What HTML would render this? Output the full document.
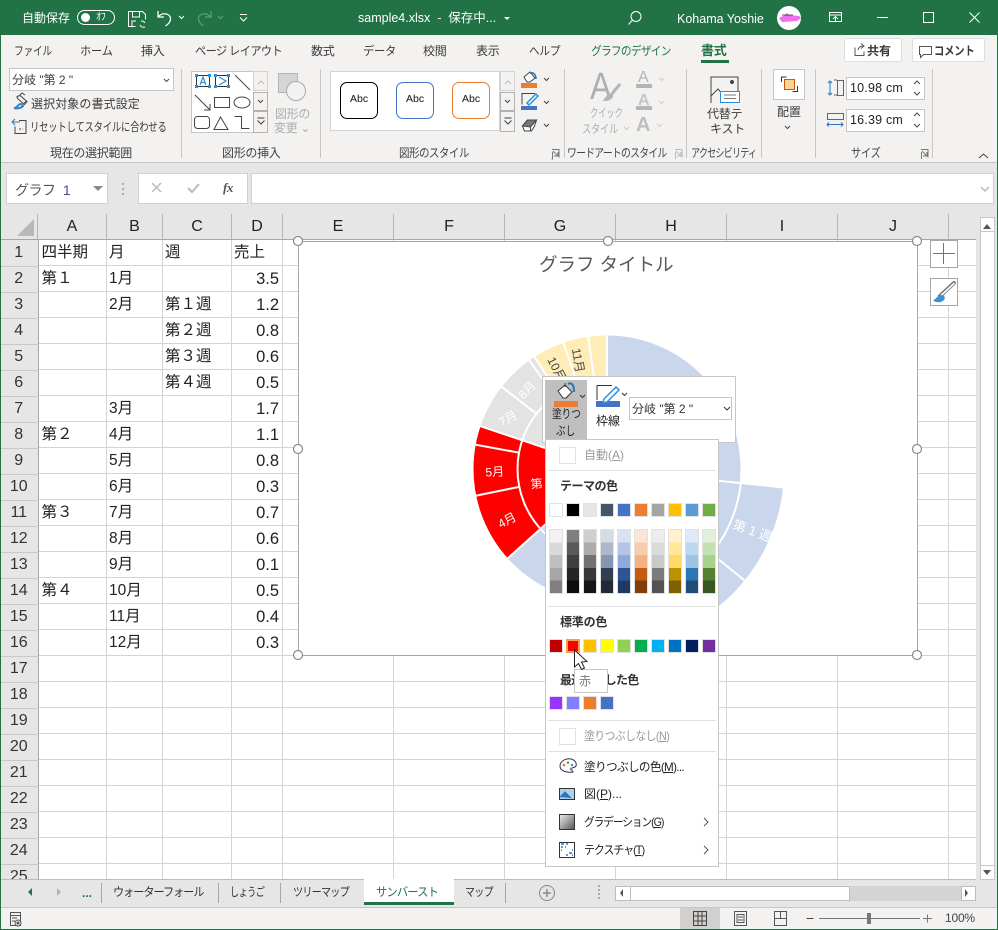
<!DOCTYPE html>
<html lang="ja"><head><meta charset="utf-8"><title>sample4.xlsx</title>
<style>
*{box-sizing:border-box}
html,body{margin:0;padding:0;width:998px;height:930px;overflow:hidden;background:#fff}
body{position:relative;font-family:"Liberation Sans","Noto Sans CJK JP",sans-serif;font-size:12px;color:#3b3a39}
.a{position:absolute}
.t{position:absolute;white-space:nowrap;line-height:16px;height:16px;letter-spacing:-.3px;transform-origin:0 0}
.sv{position:absolute;left:0;top:0;overflow:visible}
#tb .t{color:#fff}
.g{color:#adadad}
table{border-collapse:collapse;table-layout:fixed;position:absolute;left:0;top:0;width:282px;font-size:15.5px;color:#222}
td{height:26px;padding:0 0 0 3px;white-space:nowrap;overflow:visible;line-height:24px;vertical-align:middle}
td.h{background:#e6e6e6;border-bottom:1px solid #c9c9c9;border-right:1px solid #a6a6a6;text-align:center;padding:0;color:#333;font-size:16px}
td.n{text-align:right;padding:0 3px 0 0;font-size:16.5px}
.sw{position:absolute;width:14px;height:14px;border:1px solid #e1e1e1}
.tc{position:absolute;top:529px;width:14px;height:65px;border:1px solid #e1e1e1}
.sep{position:absolute;left:548px;width:168px;height:1px;background:#e1e1e1}
.col{position:absolute;top:214px;height:25px;line-height:25px;text-align:center;font-size:16px;color:#222;border-right:1px solid #b5b5b5}
.vs{position:absolute;width:1px;background:#c8c6c4;top:69px;height:89px}
.grp{position:absolute;top:145px;line-height:16px;white-space:nowrap;letter-spacing:-.3px;color:#444;transform-origin:0 0}
</style></head><body>

<!-- title bar -->
<div id="tb" class="a" style="left:0;top:0;width:998px;height:35px;background:#217346">
<div class="t" style="left:22px;top:10px;letter-spacing:0">自動保存</div>
<div class="a" style="left:77px;top:10px;width:38px;height:15px;border:1px solid #fff;border-radius:8px"></div>
<div class="a" style="left:81px;top:13px;width:9px;height:9px;background:#fff;border-radius:50%"></div>
<div class="t" style="left:96px;top:10px;font-size:10px">ｵﾌ</div>
<div class="t" style="left:358px;top:10px;letter-spacing:0;font-size:12.5px">sample4.xlsx&nbsp; -&nbsp; 保存中...</div>
<div class="t" style="left:677px;top:11px;letter-spacing:0;font-size:12.5px">Kohama Yoshie</div>
<svg class="sv" width="998" height="35" fill="none" stroke="#fff">
<path d="M128.500 11.500h14l3 3v5M128.500 11.500v15h7M132.500 12v5h7v-5M132 26v-5h4"/>
<path d="M141 21a4 4 0 0 1 4 2M145 27a4 4 0 0 1-5-2" />
<path stroke-width="1.300" d="M158 11v6h6M158.500 17c3-5 12-4 12 2 0 3-2 5-5 7"/>
<path d="M179 16l2.500 2.500L184 16"/>
<path stroke="#5a9a78" stroke-width="1.300" d="M211 11v6h-6M210.500 17c-3-5-12-4-12 2 0 3 2 5 5 7M218 16l2.500 2.500L223 16"/>
<path d="M240 14.500h7M240 17.500l3.500 3.500 3.500-3.500"/>
<path fill="#fff" stroke="none" d="M504 17h6l-3 3z"/>
<circle cx="636" cy="16.500" r="5"/><path d="M632.500 20l-4 4.500"/>
<path d="M829.500 12.500h12v9h-12zM829.500 15h12M835.500 21v-4M833 19l2.500-2.500L838 19"/>
<path d="M877 17.500h11M923.500 12.500h10v10h-10zM969.500 12.500l10 10M979.500 12.500l-10 10"/>
<circle cx="789" cy="18" r="12" fill="#fff" stroke="none"/>
<path d="M779 18l6-3 2-2 2 2 10 1 2 2-4 3-15 1z" fill="#f06ef0" stroke="none"/>
<path d="M782 15h11" stroke="#222" stroke-width=".7"/>
</svg>
</div>

<!-- ribbon -->
<div class="a" style="left:0;top:35px;width:998px;height:128px;background:#f3f2f1;border-bottom:1px solid #c8c6c4"></div>
<div class="t" style="left:14px;top:43px;transform:scaleX(.81)">ファイル</div>
<div class="t" style="left:80px;top:43px;transform:scaleX(.94)">ホーム</div>
<div class="t" style="left:141px;top:43px">挿入</div>
<div class="t" style="left:195px;top:43px;letter-spacing:-.6px;transform:scaleX(.93)">ページ レイアウト</div>
<div class="t" style="left:311px;top:43px">数式</div>
<div class="t" style="left:363px;top:43px;transform:scaleX(.94)">データ</div>
<div class="t" style="left:423px;top:43px">校閲</div>
<div class="t" style="left:476px;top:43px">表示</div>
<div class="t" style="left:529px;top:43px;transform:scaleX(.89)">ヘルプ</div>
<div class="t" style="left:591px;top:43px;color:#217346;letter-spacing:-.8px;transform:scaleX(.89)">グラフのデザイン</div>
<div class="t" style="left:701px;top:43px;color:#217346;font-weight:bold;font-size:13px">書式</div>
<div class="a" style="left:701px;top:60px;width:28px;height:3px;background:#217346"></div>
<div class="a" style="left:844px;top:38px;width:58px;height:24px;background:#fff;border:1px solid #e1dfdd;border-radius:2px"></div>
<div class="t" style="left:867px;top:43px;font-weight:bold;letter-spacing:0">共有</div>
<div class="a" style="left:912px;top:38px;width:73px;height:24px;background:#fff;border:1px solid #e1dfdd;border-radius:2px"></div>
<div class="t" style="left:934px;top:43px;font-weight:bold;letter-spacing:-.2px;transform:scaleX(.86)">コメント</div>

<div class="a" style="left:9px;top:68px;width:165px;height:23px;background:#fff;border:1px solid #c8c6c4"></div>
<div class="t" style="left:12px;top:72px;letter-spacing:0">分岐 "第 2 "</div>
<div class="t" style="left:31px;top:96px;letter-spacing:.1px">選択対象の書式設定</div>
<div class="t" style="left:30px;top:119px;transform:scaleX(.78)">リセットしてスタイルに合わせる</div>
<div class="grp" style="left:50px">現在の選択範囲</div>
<div class="vs" style="left:181px"></div>
<div class="a" style="left:191px;top:71px;width:77px;height:62px;background:#fff;border:1px solid #c8c6c4"></div>
<div class="a" style="left:253px;top:71px;width:15px;height:20px;background:#f3f2f1;border:1px solid #d5d3d1"></div>
<div class="a" style="left:253px;top:92px;width:15px;height:19px;background:#f3f2f1;border:1px solid #b5b3b1"></div>
<div class="a" style="left:253px;top:111px;width:15px;height:22px;background:#f3f2f1;border:1px solid #b5b3b1"></div>
<div class="a g" style="left:278px;top:73px;width:20px;height:20px;background:#d5d5d5;border:1px solid #b5b5b5"></div>
<div class="a" style="left:286px;top:81px;width:20px;height:20px;background:#f3f2f1;border:1px solid #a8a8a8;border-radius:50%"></div>
<div class="t g" style="left:275px;top:106px">図形の</div>
<div class="t g" style="left:274px;top:120px">変更 ⌄</div>
<div class="grp" style="left:222px">図形の挿入</div>
<div class="vs" style="left:320px"></div>
<div class="a" style="left:330px;top:71px;width:170px;height:60px;background:#fff;border:1px solid #d5d3d1"></div>
<div class="a" style="left:340px;top:82px;width:38px;height:37px;background:#fff;border:1px solid #000;border-radius:7px"></div>
<div class="a" style="left:396px;top:82px;width:38px;height:37px;background:#fff;border:1px solid #4472c4;border-radius:7px"></div>
<div class="a" style="left:452px;top:82px;width:38px;height:37px;background:#fff;border:1px solid #ed7d31;border-radius:7px"></div>
<div class="t" style="left:350px;top:91px;font-size:10.500px;color:#111;letter-spacing:0">Abc</div>
<div class="t" style="left:406px;top:91px;font-size:10.500px;color:#111;letter-spacing:0">Abc</div>
<div class="t" style="left:462px;top:91px;font-size:10.500px;color:#111;letter-spacing:0">Abc</div>
<div class="a" style="left:500px;top:71px;width:15px;height:20px;background:#f3f2f1;border:1px solid #d5d3d1"></div>
<div class="a" style="left:500px;top:92px;width:15px;height:19px;background:#f3f2f1;border:1px solid #b5b3b1"></div>
<div class="a" style="left:500px;top:111px;width:15px;height:21px;background:#f3f2f1;border:1px solid #b5b3b1"></div>
<div class="a" style="left:521px;top:83px;width:16px;height:5px;background:#ed7d31"></div>
<div class="a" style="left:521px;top:106px;width:16px;height:4px;background:#4472c4"></div>
<div class="grp" style="left:399px;letter-spacing:-.6px;transform:scaleX(.875)">図形のスタイル</div>
<div class="vs" style="left:564px"></div>
<div class="t g" style="left:590px;top:105px;transform:scaleX(.7)">クイック</div>
<div class="t g" style="left:582px;top:121px;transform:scaleX(.77)">スタイル</div>
<div class="t" style="left:590px;top:65px;font-size:38px;line-height:44px;height:44px;color:#b0b0b0;letter-spacing:0;transform:scaleX(.85)">A</div>
<div class="t" style="left:638px;top:69px;font-size:16px;line-height:18px;height:18px;color:#b5b5b5;letter-spacing:0">A</div>
<div class="a" style="left:636px;top:84px;width:16px;height:4px;background:#b5b5b5"></div>
<div class="t" style="left:638px;top:92px;font-size:16px;line-height:18px;height:18px;color:#c5c5c5;letter-spacing:0;font-weight:bold">A</div>
<div class="a" style="left:636px;top:106px;width:16px;height:4px;background:#b5b5b5"></div>
<div class="t" style="left:636px;top:114px;font-size:20px;line-height:22px;height:22px;color:#c0c0c0;letter-spacing:0;font-weight:bold">A</div>
<div class="grp" style="left:567px;letter-spacing:-.9px;transform:scaleX(.82)">ワードアートのスタイル</div>
<div class="vs" style="left:686px"></div>
<div class="t" style="left:707px;top:106px;letter-spacing:-.2px">代替テ</div>
<div class="t" style="left:710px;top:121px;letter-spacing:-.2px">キスト</div>
<div class="grp" style="left:691px;letter-spacing:-1.100px;transform:scaleX(.76)">アクセシビリティ</div>
<div class="vs" style="left:761px"></div>
<div class="a" style="left:773px;top:69px;width:32px;height:31px;background:#fff;border:1px solid #c8c6c4"></div>
<div class="a" style="left:784px;top:79px;width:11px;height:11px;background:#fbd58f;border:1px solid #c55a11"></div>
<div class="t" style="left:777px;top:104px;letter-spacing:0">配置</div>
<div class="vs" style="left:815px"></div>
<div class="a" style="left:846px;top:77px;width:79px;height:23px;background:#fff;border:1px solid #c8c6c4"></div>
<div class="a" style="left:846px;top:109px;width:79px;height:23px;background:#fff;border:1px solid #c8c6c4"></div>
<div class="t" style="left:850px;top:80px;letter-spacing:.2px;font-size:12.500px;color:#222">10.98 cm</div>
<div class="t" style="left:850px;top:112px;letter-spacing:.2px;font-size:12.500px;color:#222">16.39 cm</div>
<div class="grp" style="left:851px;transform:scaleX(.85)">サイズ</div>
<div class="vs" style="left:932px"></div>
<svg class="sv" width="998" height="165" fill="none" stroke="#444">
<!-- group1 icons -->
<path d="M17 96.500l3-1 7 6-2.500 3-7-6zM20 95l2-2 3 2"/><path stroke="#444" d="M24 103l3-2"/>
<path stroke="#3d7fc4" stroke-width="2" d="M14 108c3 0 4-3 6-4 2 0 3 1 3 2-2 2-5 3-9 2z"/>
<path d="M19 120.500h7v13H15v-7"/><path stroke="#2e75b6" d="M13 122h7M15 119l-3 3 3 3"/><path stroke-dasharray="2 1.500" d="M19 129h4"/>
<!-- shape gallery -->
<g stroke="#333"><rect x="196.500" y="75.500" width="13" height="11"/><rect x="215.500" y="75.500" width="13" height="11"/></g>
<g fill="#2e8fd8" stroke="none"><rect x="195" y="74" width="3" height="3"/><rect x="208" y="74" width="3" height="3"/><rect x="195" y="85" width="3" height="3"/><rect x="208" y="85" width="3" height="3"/><rect x="214" y="74" width="3" height="3"/><rect x="227" y="74" width="3" height="3"/><rect x="214" y="85" width="3" height="3"/><rect x="227" y="85" width="3" height="3"/></g>
<path stroke="#2e8fd8" stroke-width="1.200" d="M200 85l3-8 3 8M201 82.500h4M219 77l7 4-7 4"/>
<path d="M235 75l15 15"/>
<path d="M195 95l15 15M210 104v6h-6"/>
<rect x="214.500" y="97.500" width="15" height="10"/><ellipse cx="242" cy="102.500" rx="8" ry="5.500"/>
<rect x="194.500" y="116.500" width="15" height="12" rx="3"/><path d="M220.500 117l-6.500 12.500h14z"/><path d="M234.500 116.500h7v12h8"/>
<path stroke="#bbb" d="M258 84l3-3 3 3"/><path d="M258 100l2.500 2.500 2.500-2.500M257.500 118h7M257.500 120.500l3.500 3.500 3.500-3.500"/>
<path stroke="#bbb" d="M505 84l3-3 3 3"/><path d="M505 100l2.500 2.500 2.500-2.500M504.500 118h7M504.500 120.500l3.500 3.500 3.500-3.500"/>
<!-- fill/line/effect -->
<path d="M524 77l6-5 5 6-5 4h-3z" fill="#fff"/><path stroke="#2e75b6" stroke-width="1.500" d="M530 73c4-1 6 2 6 6"/>
<path d="M544 78l2.500 2.500 2.500-2.500M544 101l2.500 2.500 2.500-2.500M544 124l2.500 2.500 2.500-2.500"/>
<path d="M535 93.500h-13v11"/><path stroke="#2e8fd8" stroke-width="1.500" d="M527 103l9-9 2 2-9 9z" fill="#fff"/>
<path d="M522.500 126l5-6h9l-2 6-3 5h-7z" fill="#fff" stroke="#444"/><path d="M522.500 126l8 1 6-7h-9z" fill="#777" stroke="#444"/><path d="M530.500 127v4" stroke="#444"/>
<!-- launchers -->
<path stroke="#777" d="M552.500 152v7h-1M552 149.500h7v8M553 151l5 5M558 152v4h-4"/>
<path stroke="#bbb" d="M675.500 152v7M675 149.500h7v8M676 151l5 5M681 152v4h-4"/>
<path stroke="#777" d="M921.500 152v7M921 149.500h7v8M922 151l5 5M927 152v4h-4"/>
<path d="M979 158l4.500-4 4.500 4"/>
<!-- wordart -->
<path stroke="#b5b5b5" stroke-width="3" d="M620 84l-9 11"/><path d="M603 101c2-4 5-8 9-7 2 1 1 4-1 5-2 2-5 2-8 2z" fill="#b5b5b5" stroke="none"/>
<path stroke="#ccc" d="M659 78l2.500 2.500 2.500-2.500M659 101l2.500 2.500 2.500-2.500M657 124l2.500 2.500 2.500-2.500M624 127l2.500 2.500 2.500-2.500"/>
<!-- alt text -->
<path d="M711 103V77h27v14M711 96l7-7 7 8 5-3 5 3"/><circle cx="732" cy="82" r="1.500" fill="#444"/>
<rect x="720.500" y="91.500" width="19" height="11" fill="#fff" stroke="#2e8fd8"/><path d="M724 95h12M724 98.500h12" stroke="#777"/>
<path d="M785 126l2.500 2.500 2.500-2.500"/>
<path d="M781.500 82v-5h5M797.500 86v5.500h-5" stroke="#333"/>
<path stroke="#2e75b6" d="M830 81v14M828 83l2-2 2 2M828 93l2 2 2-2"/><rect x="837.500" y="80.500" width="6" height="15" stroke="#666"/><path stroke="#666" d="M834 80h3M834 95h3"/>
<path stroke="#2e75b6" d="M827 124.500h16M829 122.500l-2 2 2 2M841 122.500l2 2-2 2"/><path stroke="#666" d="M827.500 113.500h16v6h-16z"/>
<path d="M914 84l3-3 3 3M914 92l3 3 3-3M914 116l3-3 3 3M914 124l3 3 3-3"/>
<path d="M164 79l2.500 2.500 2.500-2.500"/>
<path d="M855 47.500v8h9v-4M858 50c1-4 4-4 5-4M861 43.500l3 2.500-3 2.500" stroke="#555"/>
<path d="M919.500 46.500h12v8h-8l-3 3v-3h-1z" stroke="#555"/>
</svg>

<!-- formula bar -->
<div class="a" style="left:0;top:163px;width:998px;height:767px;background:#e6e6e6"></div>
<div class="a" style="left:6px;top:173px;width:102px;height:31px;background:#fff;border:1px solid #d0d0d0"></div>
<div class="t" style="left:15px;top:182px;color:#555;font-size:14px;letter-spacing:-.5px">グラフ&nbsp;<span style="color:#4a4a8a;margin-left:4px">1</span></div>
<div class="a" style="left:93px;top:186px;border:5px solid transparent;border-top:5px solid #888"></div>
<div class="a" style="left:138px;top:173px;width:110px;height:31px;background:#fff;border:1px solid #d0d0d0"></div>
<div class="a" style="left:251px;top:173px;width:743px;height:31px;background:#fff;border:1px solid #d0d0d0"></div>
<div class="t" style="left:223px;top:180px;font-family:'Liberation Serif',serif;font-style:italic;font-weight:bold;font-size:13px;color:#555;letter-spacing:-.5px">fx</div>
<svg class="sv" width="998" height="240" fill="none">
<path stroke="#bbb" stroke-width="1.500" d="M152 183l9 9M161 183l-9 9"/><path stroke="#bbb" stroke-width="2" d="M188 188l4 4 7-8"/>
<path stroke="#aaa" stroke-width="2" stroke-dasharray="2 3" d="M123 183v12"/>
<path stroke="#bbb" stroke-width="1.500" d="M981 187l4 4 4-4"/>
<path fill="#b8b8b8" d="M17 236l17-17v17z"/>
</svg>

<!-- column headers -->
<div class="a" style="left:0;top:214px;width:38px;height:25px;border-right:1px solid #b5b5b5"></div>
<div class="col" style="left:38px;width:69px">A</div>
<div class="col" style="left:107px;width:56px">B</div>
<div class="col" style="left:163px;width:69px">C</div>
<div class="col" style="left:232px;width:51px">D</div>
<div class="col" style="left:283px;width:111px">E</div>
<div class="col" style="left:394px;width:111px">F</div>
<div class="col" style="left:505px;width:111px">G</div>
<div class="col" style="left:616px;width:111px">H</div>
<div class="col" style="left:727px;width:111px">I</div>
<div class="col" style="left:838px;width:111px">J</div>
<div class="a" style="left:0;top:239px;width:976px;height:1px;background:#a6a6a6"></div>

<!-- sheet -->
<div class="a" style="left:38px;top:240px;width:938px;height:639px;background:#fff repeating-linear-gradient(to bottom,transparent 0 25px,#d4d4d4 25px 26px)"></div>
<svg class="sv" style="top:240px;left:0" width="976" height="639"><path stroke="#d4d4d4" fill="none" d="M106.500 0v639M162.500 0v639M231.500 0v639M282.500 0v639M393.500 0v639M504.500 0v639M615.500 0v639M726.500 0v639M837.500 0v639M948.500 0v639"/></svg>
<div class="a" style="left:0;top:240px;width:282px;height:639px;overflow:hidden">
<table><colgroup><col style="width:38px"><col style="width:68px"><col style="width:56px"><col style="width:69px"><col style="width:51px"></colgroup>
<tr><td class="h">1</td><td>四半期</td><td>月</td><td>週</td><td>売上</td></tr>
<tr><td class="h">2</td><td>第１</td><td>1月</td><td></td><td class="n">3.5</td></tr>
<tr><td class="h">3</td><td></td><td>2月</td><td>第１週</td><td class="n">1.2</td></tr>
<tr><td class="h">4</td><td></td><td></td><td>第２週</td><td class="n">0.8</td></tr>
<tr><td class="h">5</td><td></td><td></td><td>第３週</td><td class="n">0.6</td></tr>
<tr><td class="h">6</td><td></td><td></td><td>第４週</td><td class="n">0.5</td></tr>
<tr><td class="h">7</td><td></td><td>3月</td><td></td><td class="n">1.7</td></tr>
<tr><td class="h">8</td><td>第２</td><td>4月</td><td></td><td class="n">1.1</td></tr>
<tr><td class="h">9</td><td></td><td>5月</td><td></td><td class="n">0.8</td></tr>
<tr><td class="h">10</td><td></td><td>6月</td><td></td><td class="n">0.3</td></tr>
<tr><td class="h">11</td><td>第３</td><td>7月</td><td></td><td class="n">0.7</td></tr>
<tr><td class="h">12</td><td></td><td>8月</td><td></td><td class="n">0.6</td></tr>
<tr><td class="h">13</td><td></td><td>9月</td><td></td><td class="n">0.1</td></tr>
<tr><td class="h">14</td><td>第４</td><td>10月</td><td></td><td class="n">0.5</td></tr>
<tr><td class="h">15</td><td></td><td>11月</td><td></td><td class="n">0.4</td></tr>
<tr><td class="h">16</td><td></td><td>12月</td><td></td><td class="n">0.3</td></tr>
<tr><td class="h">17</td><td></td><td></td><td></td><td></td></tr>
<tr><td class="h">18</td><td></td><td></td><td></td><td></td></tr>
<tr><td class="h">19</td><td></td><td></td><td></td><td></td></tr>
<tr><td class="h">20</td><td></td><td></td><td></td><td></td></tr>
<tr><td class="h">21</td><td></td><td></td><td></td><td></td></tr>
<tr><td class="h">22</td><td></td><td></td><td></td><td></td></tr>
<tr><td class="h">23</td><td></td><td></td><td></td><td></td></tr>
<tr><td class="h">24</td><td></td><td></td><td></td><td></td></tr>
<tr><td class="h">25</td><td></td><td></td><td></td><td></td></tr>
</table></div>

<!-- chart -->
<div class="a" style="left:298px;top:241px;width:620px;height:415px;background:#fff;border:1px solid #a6a6a6"></div>
<div class="t" style="left:539px;top:253px;height:24px;line-height:24px;font-size:18.500px;color:#595959;letter-spacing:0">グラフ タイトル</div>
<svg class="sv" width="998" height="930" fill="none" font-family="'Liberation Sans','Noto Sans CJK JP',sans-serif">
<g transform="translate(607 469)">
<g stroke-width="44" stroke="#c9d6ec">
<circle r="67" stroke-width="44" pathLength="360" stroke-dasharray="228 132" transform="rotate(-90)"/>
<circle r="112" pathLength="360" stroke-dasharray="228 132" transform="rotate(-90)"/>
<circle r="155.500" stroke-width="43" pathLength="360" stroke-dasharray="85.300 274.700" transform="rotate(6)"/>
<circle r="67" stroke="#f00" pathLength="360" stroke-dasharray="60.500 299.500" transform="rotate(138)"/>
<circle r="112" stroke="#f00" pathLength="360" stroke-dasharray="60.500 299.500" transform="rotate(138)"/>
<circle r="67" stroke="#e3e3e3" pathLength="360" stroke-dasharray="38.500 321.500" transform="rotate(198.700)"/>
<circle r="112" stroke="#e3e3e3" pathLength="360" stroke-dasharray="38.500 321.500" transform="rotate(198.700)"/>
<circle r="67" stroke="#ffedb8" pathLength="360" stroke-dasharray="33 327" transform="rotate(237)"/>
<circle r="112" stroke="#ffedb8" pathLength="360" stroke-dasharray="33 327" transform="rotate(237)"/>
</g>
<g stroke="#fff" stroke-width="2">
<circle r="134.500"/><circle r="89.500"/>
<path id="sp" d="M0-45V-177" transform="rotate(96)"/>
<path d="M0-134V-177" transform="rotate(129)"/><path d="M0-134V-177" transform="rotate(151)"/><path d="M0-134V-177" transform="rotate(167.500)"/>
<path d="M0-45V-134" transform="rotate(181.300)"/><path d="M0-45V-134" transform="rotate(228)"/>
<path d="M0-89V-134" transform="rotate(258.500)"/><path d="M0-89V-134" transform="rotate(280.500)"/>
<path d="M0-45V-134" transform="rotate(288.700)"/><path d="M0-89V-134" transform="rotate(308)"/><path d="M0-89V-134" transform="rotate(324.400)"/>
<path d="M0-45V-134" transform="rotate(327.100)"/><path d="M0-89V-134" transform="rotate(340.900)"/><path d="M0-89V-134" transform="rotate(351.900)"/><path d="M0-45V-134"/>
</g>
</g>
<g font-size="12" text-anchor="middle" fill="#fff" stroke="none">
<text transform="translate(495 476) rotate(-3)">5月</text>
<text transform="translate(509 524) rotate(-28)">4月</text>
<text transform="translate(537 488) rotate(-5)">第</text>
<text transform="translate(510 422) rotate(-30)">7月</text>
<text transform="translate(530 393) rotate(-45)">8月</text>
<text transform="translate(751 535) rotate(20)" font-size="13">第 1 週</text>
<text transform="translate(553 371) rotate(62)" fill="#444">10月</text>
<text transform="translate(574 361) rotate(80)" fill="#444">11月</text>
</g>
<g fill="#fff" stroke="#8a8a8a" stroke-width="1.200">
<circle cx="298" cy="241" r="4.500"/><circle cx="608" cy="241" r="4.500"/><circle cx="917" cy="241" r="4.500"/>
<circle cx="298" cy="449" r="4.500"/><circle cx="917" cy="449" r="4.500"/>
<circle cx="298" cy="655" r="4.500"/><circle cx="608" cy="655" r="4.500"/><circle cx="917" cy="655" r="4.500"/>
</g>
<rect x="930.500" y="240.500" width="27" height="27" fill="#fff" stroke="#a6a6a6"/>
<path d="M943.500 243v21M933 253.500h22" stroke="#22a34a" stroke-width="1"/>
<rect x="930.500" y="278.500" width="27" height="27" fill="#fff" stroke="#a6a6a6"/>
<path d="M940 296l14-13" stroke="#777" stroke-width="4" stroke-linecap="round"/><path d="M940.500 296l13.500-12.500" stroke="#fff" stroke-width="1.600" stroke-linecap="round"/>
<path d="M933 300c3 0 4-5 8-5 3 0 5 2 3 5-3 3-8 3-11 0z" fill="#3d8ede"/>
</svg>

<!-- float toolbar -->
<div class="a" style="left:542px;top:376px;width:194px;height:67px;background:#fff;border:1px solid #c6c6c6"></div>
<div class="a" style="left:545px;top:380px;width:42px;height:60px;background:#bfbfbf"></div>
<div class="a" style="left:554px;top:401px;width:24px;height:6px;background:#ed7d31"></div>
<div class="a" style="left:596px;top:401px;width:24px;height:6px;background:#4472c4"></div>
<div class="t" style="left:552px;top:406px;color:#222;letter-spacing:0;transform:scaleX(.8)">塗りつ</div>
<div class="t" style="left:556px;top:423px;color:#222;letter-spacing:0;transform:scaleX(.8)">ぶし</div>
<div class="t" style="left:596px;top:413px;color:#222;letter-spacing:0">枠線</div>
<div class="a" style="left:629px;top:397px;width:103px;height:23px;background:#fff;border:1px solid #c6c6c6"></div>
<div class="t" style="left:632px;top:401px;color:#333;letter-spacing:0">分岐 "第 2 "</div>

<!-- color menu -->
<div class="a" style="left:545px;top:439px;width:174px;height:428px;background:#fff;border:1px solid #c6c6c6"></div>
<div class="a" style="left:559px;top:447px;width:17px;height:17px;border:1px solid #e1e1e1"></div>
<div class="t g" style="left:584px;top:447px;color:#999;letter-spacing:0">自動(<u>A</u>)</div>
<div class="sep" style="top:470px"></div>
<div class="t" style="left:560px;top:478px;font-weight:bold;color:#333;letter-spacing:-.5px">テーマの色</div>
<div class="sw" style="left:549px;top:503px;background:#fff"></div>
<div class="sw" style="left:566px;top:503px;background:#000"></div>
<div class="sw" style="left:583px;top:503px;background:#e7e6e6"></div>
<div class="sw" style="left:600px;top:503px;background:#44546a"></div>
<div class="sw" style="left:617px;top:503px;background:#4472c4"></div>
<div class="sw" style="left:634px;top:503px;background:#ed7d31"></div>
<div class="sw" style="left:651px;top:503px;background:#a5a5a5"></div>
<div class="sw" style="left:668px;top:503px;background:#ffc000"></div>
<div class="sw" style="left:685px;top:503px;background:#5b9bd5"></div>
<div class="sw" style="left:702px;top:503px;background:#70ad47"></div>
<div class="tc" style="left:549px;background:linear-gradient(#f2f2f2 20%,#d9d9d9 20% 40%,#bfbfbf 40% 60%,#a6a6a6 60% 80%,#808080 80%)"></div>
<div class="tc" style="left:566px;background:linear-gradient(#7f7f7f 20%,#595959 20% 40%,#404040 40% 60%,#262626 60% 80%,#0d0d0d 80%)"></div>
<div class="tc" style="left:583px;background:linear-gradient(#d0cece 20%,#aeabab 20% 40%,#757171 40% 60%,#3a3838 60% 80%,#171616 80%)"></div>
<div class="tc" style="left:600px;background:linear-gradient(#d6dce5 20%,#adb9ca 20% 40%,#8497b0 40% 60%,#333f50 60% 80%,#222a35 80%)"></div>
<div class="tc" style="left:617px;background:linear-gradient(#d9e2f3 20%,#b4c6e7 20% 40%,#8eaadb 40% 60%,#2f5496 60% 80%,#1f3864 80%)"></div>
<div class="tc" style="left:634px;background:linear-gradient(#fbe5d6 20%,#f8cbad 20% 40%,#f4b183 40% 60%,#c55a11 60% 80%,#843c0c 80%)"></div>
<div class="tc" style="left:651px;background:linear-gradient(#ededed 20%,#dbdbdb 20% 40%,#c9c9c9 40% 60%,#7b7b7b 60% 80%,#525252 80%)"></div>
<div class="tc" style="left:668px;background:linear-gradient(#fff2cc 20%,#ffe699 20% 40%,#ffd966 40% 60%,#bf9000 60% 80%,#7f6000 80%)"></div>
<div class="tc" style="left:685px;background:linear-gradient(#deebf7 20%,#bdd7ee 20% 40%,#9dc3e6 40% 60%,#2e75b6 60% 80%,#1f4e79 80%)"></div>
<div class="tc" style="left:702px;background:linear-gradient(#e2f0d9 20%,#c5e0b4 20% 40%,#a9d18e 40% 60%,#548235 60% 80%,#385723 80%)"></div>
<div class="sep" style="top:606px"></div>
<div class="t" style="left:560px;top:614px;font-weight:bold;color:#333;letter-spacing:-.2px">標準の色</div>
<div class="sw" style="left:549px;top:639px;background:#c00000"></div>
<div class="sw" style="left:566px;top:639px;background:#f00;border:2px solid #f4a14f"></div>
<div class="sw" style="left:583px;top:639px;background:#ffc000"></div>
<div class="sw" style="left:600px;top:639px;background:#ff0"></div>
<div class="sw" style="left:617px;top:639px;background:#92d050"></div>
<div class="sw" style="left:634px;top:639px;background:#00b050"></div>
<div class="sw" style="left:651px;top:639px;background:#00b0f0"></div>
<div class="sw" style="left:668px;top:639px;background:#0070c0"></div>
<div class="sw" style="left:685px;top:639px;background:#002060"></div>
<div class="sw" style="left:702px;top:639px;background:#7030a0"></div>
<div class="t" style="left:560px;top:672px;font-weight:bold;color:#333;letter-spacing:-.8px">最近使用した色</div>
<div class="a" style="left:574px;top:669px;width:34px;height:24px;background:#fff;border:1px solid #c6c6c6"></div>
<div class="t" style="left:579px;top:673px;color:#777;letter-spacing:0">赤</div>
<div class="sw" style="left:549px;top:696px;background:#9933ff"></div>
<div class="sw" style="left:566px;top:696px;background:#7f7fff"></div>
<div class="sw" style="left:583px;top:696px;background:#ed7d31"></div>
<div class="sw" style="left:600px;top:696px;background:#4472c4"></div>
<div class="sep" style="top:720px"></div>
<div class="a" style="left:559px;top:728px;width:17px;height:17px;border:1px solid #e1e1e1"></div>
<div class="t" style="left:584px;top:728px;color:#999;letter-spacing:-.6px;transform:scaleX(.9)">塗りつぶしなし(<u>N</u>)</div>
<div class="sep" style="top:751px"></div>
<div class="t" style="left:584px;top:759px;color:#222;letter-spacing:-.7px;transform:scaleX(.97)">塗りつぶしの色(<u>M</u>)...</div>
<div class="t" style="left:584px;top:786px;color:#222;letter-spacing:0">図(<u>P</u>)...</div>
<div class="t" style="left:584px;top:814px;color:#222;letter-spacing:-1.200px;transform:scaleX(.89)">グラデーション(<u>G</u>)</div>
<div class="t" style="left:584px;top:842px;color:#222;letter-spacing:-1.100px;transform:scaleX(.91)">テクスチャ(<u>T</u>)</div>
<svg class="sv" width="998" height="930" fill="none">
<defs><linearGradient id="gr" x1="0" y1="0" x2="1" y2="1"><stop offset="0" stop-color="#eee"/><stop offset="1" stop-color="#555"/></linearGradient></defs>
<!-- fill icon -->
<path d="M558 391l7-6 7 7-6 6h-3z" fill="#fff" stroke="#333"/><path d="M565 387v-4" stroke="#333"/><path d="M568 384c4-2 6 1 6 8" stroke="#2e75b6" stroke-width="2"/>
<path d="M580 395l2.500 2.500 2.500-2.500M622 393l2.500 2.500 2.500-2.500M724 407l3 3 3-3" stroke="#333"/>
<path d="M612 385.500h-15v14.500" stroke="#333"/><path d="M604 399l12-12 3 3-12 12-4 1z" fill="#fff" stroke="#2e8fd8" stroke-width="1.500"/>
<!-- menu icons -->
<path d="M573 772c-6 1-13-1-13-6s6-8 11-7c4 1 6 4 5 7-1 2-4 1-5 3z" stroke="#333"/><circle cx="564" cy="765" r="1.300" fill="#e66"/><circle cx="568" cy="762.500" r="1.300" fill="#4a4"/><circle cx="572" cy="765" r="1.300" fill="#49d"/><circle cx="571" cy="769" r="1.300" fill="#a5c"/>
<rect x="559.500" y="788.500" width="15" height="11" stroke="#333" fill="#a9d0ee"/><path d="M560 797l5-5 6 6" fill="#2e75b6" stroke="#2e75b6"/>
<rect x="559.500" y="814.500" width="15" height="15" fill="url(#gr)" stroke="#333"/>
<rect x="559.500" y="842.500" width="15" height="15" fill="#fff" stroke="#333"/>
<path d="M561 844h3M566 844h2M561 847h2M565 847h1M572 855h1M569 853h3M566 855h2M572 850h1M561 850h1" stroke="#2e75b6" stroke-width="1.500"/>
<path d="M704 818l4 4-4 4M704 846l4 4-4 4" stroke="#555"/>
<!-- cursor -->
<path d="M574.500 650v17l4-3.500 3 6 3-1.500-3-6 5.500-.5z" fill="#fff" stroke="#222"/>
</svg>

<!-- scrollbar -->
<div class="a" style="left:976px;top:214px;width:22px;height:693px;background:#e6e6e6"></div>
<div class="a" style="left:980px;top:217px;width:15px;height:663px;background:#fff;border:1px solid #c6c6c6"></div>
<div class="a" style="left:980px;top:231px;width:15px;height:1px;background:#c6c6c6"></div>
<div class="a" style="left:980px;top:865px;width:15px;height:1px;background:#c6c6c6"></div>
<div class="a" style="left:983px;top:220px;border:4.500px solid transparent;border-bottom:5px solid #555"></div>
<div class="a" style="left:983px;top:870px;border:4.500px solid transparent;border-top:5px solid #555"></div>

<!-- tabs -->
<div class="a" style="left:0;top:879px;width:976px;height:28px;background:#e6e6e6;border-top:1px solid #bdbdbd"></div>
<div class="a" style="left:364px;top:879px;width:90px;height:26px;background:#fff"></div>
<div class="a" style="left:364px;top:902px;width:90px;height:3px;background:#217346"></div>
<div class="t" style="left:82px;top:885px;color:#217346;font-weight:bold;letter-spacing:0">...</div>
<div class="t" style="left:113px;top:884px;letter-spacing:-1.100px;color:#333;transform:scaleX(.93)">ウォーターフォール</div>
<div class="t" style="left:230px;top:884px;letter-spacing:-.7px;color:#333;transform:scaleX(.76)">しょうご</div>
<div class="t" style="left:293px;top:884px;letter-spacing:-.9px;color:#333;transform:scaleX(.84)">ツリーマップ</div>
<div class="t" style="left:376px;top:884px;letter-spacing:-.9px;color:#217346;transform:scaleX(.94)">サンバースト</div>
<div class="t" style="left:465px;top:884px;letter-spacing:-.6px;color:#333;transform:scaleX(.82)">マップ</div>
<div class="a" style="left:101px;top:883px;width:1px;height:20px;background:#a6a6a6"></div>
<div class="a" style="left:218px;top:883px;width:1px;height:20px;background:#a6a6a6"></div>
<div class="a" style="left:280px;top:883px;width:1px;height:20px;background:#a6a6a6"></div>
<div class="a" style="left:505px;top:883px;width:1px;height:20px;background:#a6a6a6"></div>
<div class="a" style="left:615px;top:886px;width:361px;height:15px;background:#d4d4d4"></div>
<div class="a" style="left:615px;top:886px;width:235px;height:15px;background:#fff;border:1px solid #bdbdbd"></div>
<div class="a" style="left:961px;top:886px;width:15px;height:15px;background:#fff;border:1px solid #bdbdbd"></div>
<div class="a" style="left:630px;top:886px;width:1px;height:15px;background:#bdbdbd"></div>
<!-- status -->
<div class="a" style="left:0;top:907px;width:998px;height:23px;background:#f3f2f1;border-top:1px solid #c8c6c4"></div>
<div class="a" style="left:680px;top:908px;width:40px;height:21px;background:#d2d0ce"></div>
<div class="t" style="left:945px;top:910px;letter-spacing:-.2px;color:#444">100%</div>
<svg class="sv" width="998" height="930" fill="none" stroke="#555">
<path fill="#217346" stroke="none" d="M32 888v8l-4-4z"/><path fill="#b5b5b5" stroke="none" d="M57 888l4 4-4 4z"/>
<circle cx="547" cy="893" r="7.500" stroke="#888"/><path d="M547 889v8M543 893h8" stroke="#888" stroke-width="1.500"/>
<path stroke="#aaa" stroke-dasharray="2 2" stroke-width="2" d="M599 885v16"/>
<path fill="#555" stroke="none" d="M623 889v8l-3-4zM965 889v8l3-4z"/>
<!-- status icons -->
<path d="M10.500 912.500h10v13h-10zM10.500 915.500h10M12 918h5M12 921h3"/><circle cx="18" cy="923" r="3" fill="#f3f2f1"/><circle cx="18" cy="923" r="1" fill="#555"/>
<path d="M693.500 911.500h13v14h-13zM693.500 916h13M693.500 921h13M698 911.500v14M702 911.500v14" stroke="#444"/>
<path d="M734.500 911.500h12v14h-12zM737 914.500h7v8h-7zM738 917h5M738 920h5"/>
<path d="M774.500 911.500h12v14h-12zM780.500 911.500v7h6M774.500 918.500h6"/>
<path d="M806.500 918.500h7" stroke="#444"/><path d="M819 918.500h101M923 918.500h9M927.500 914.500v8" stroke="#777"/>
<rect x="867" y="913" width="4" height="11" fill="#777" stroke="none"/>
</svg>

<!-- window frame -->
<div class="a" style="left:0;top:35px;width:1px;height:895px;background:#217346"></div>
<div class="a" style="left:997px;top:35px;width:1px;height:895px;background:#217346"></div>
<div class="a" style="left:0;top:929px;width:998px;height:1px;background:#217346"></div>
</body></html>
